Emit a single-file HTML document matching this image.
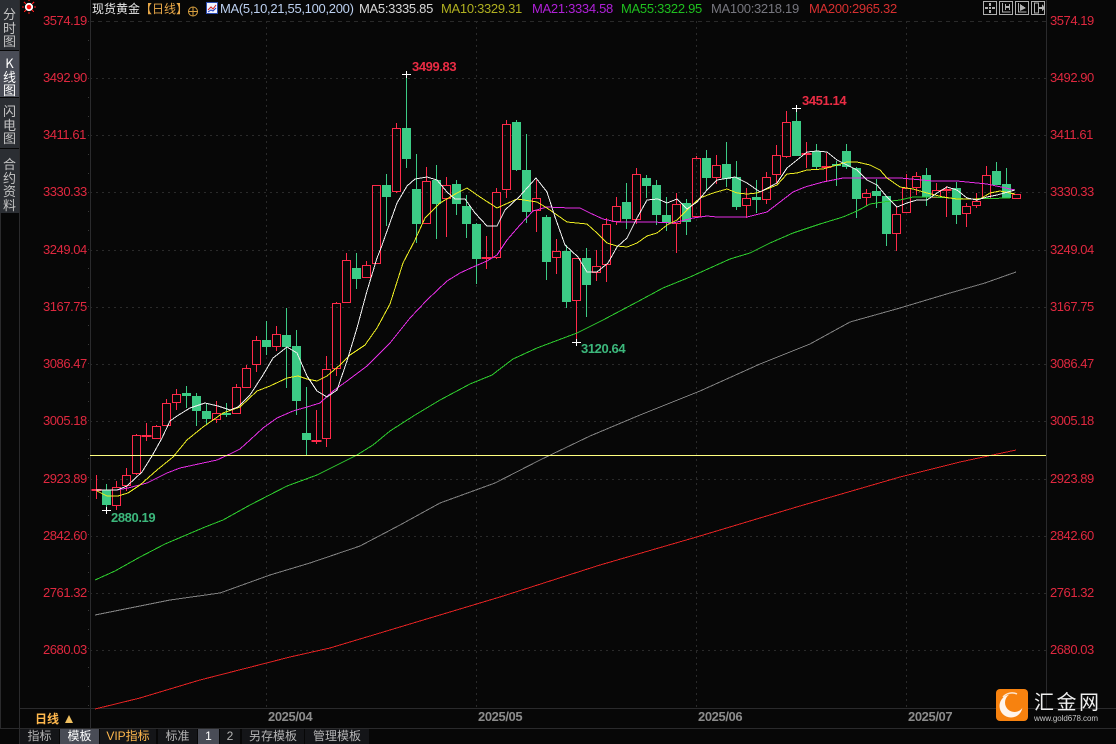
<!DOCTYPE html>
<html lang="zh">
<head>
<meta charset="utf-8">
<title>现货黄金 日线</title>
<style>
html,body{margin:0;padding:0;background:#070707;overflow:hidden}
#r{position:relative;width:1116px;height:744px;background:#070707;overflow:hidden;font-family:"Liberation Sans","WenQuanYi Zen Hei","Noto Sans CJK SC",sans-serif}
svg{position:absolute;left:0;top:0}
.t{position:absolute;left:0;width:19px;text-align:center;font-size:13px;line-height:13.5px;color:#c4c4c4;background:#2b2e33;font-family:"WenQuanYi Zen Hei","Noto Sans CJK SC",sans-serif;box-sizing:border-box}
.b{position:absolute;top:729px;height:15px;line-height:15px;text-align:center;font-size:12px;color:#b4b4b4;background:#141518;font-family:"Liberation Sans","WenQuanYi Zen Hei","Noto Sans CJK SC",sans-serif}
.h{position:absolute;top:1px;font-size:13px;letter-spacing:-.3px;line-height:16px;white-space:nowrap}
</style>
</head>
<body>
<div id="r">
<svg width="1116" height="744" viewBox="0 0 1116 744">
<g fill="none" stroke="#2a2a2a" stroke-width="1" shape-rendering="crispEdges">
<path stroke-dasharray="4 4" d="M90 21.5H1046"/>
<path stroke-dasharray="2 4" d="M90 78.5H1046M90 135.5H1046M90 192.5H1046M90 250.5H1046M90 307.5H1046M90 364.5H1046M90 421.5H1046M90 479.5H1046M90 536.5H1046M90 593.5H1046M90 650.5H1046"/>
<path stroke-dasharray="2 4" d="M266.5 21V708M476.5 21V708M696.5 21V708M906.5 21V708"/>
<path stroke="#2a2a2c" d="M90.5 0V728M1046.5 0V708M20 708.5H1116M0 728.5H1116M19.5 0V744M0.5 213V728"/>
</g>
<path fill="none" stroke="#3a3a3a" shape-rendering="crispEdges" stroke-dasharray="1 18" d="M88.5 21V708"/>

<path fill="#3ccb85" shape-rendering="crispEdges" d="M102 490h9V505h-9zM182 393h9v3h-9zM192 396h9v15h-9zM202 411h9v8h-9zM222 413h9v2h-9zM262 340h9v7h-9zM282 335h9v12h-9zM292 346h9v55h-9zM302 433h9v7h-9zM352 268h9v11h-9zM382 185h9v12h-9zM402 128h9v31h-9zM412 189h9v35h-9zM432 180h9v24h-9zM452 184h9v20h-9zM462 206h9v18h-9zM472 224h9v35h-9zM512 122h9v48h-9zM522 170h9v42h-9zM542 217h9v45h-9zM562 251h9v51h-9zM582 258h9v27h-9zM622 202h9v17h-9zM642 178h9v8h-9zM652 185h9v30h-9zM662 215h9v8h-9zM682 203h9v19h-9zM702 158h9v20h-9zM722 164h9v15h-9zM732 177h9v30h-9zM752 197h9v3h-9zM792 121h9v35h-9zM812 151h9v16h-9zM832 164h9v2h-9zM842 151h9v16h-9zM852 168h9v31h-9zM872 191h9v5h-9zM882 196h9v38h-9zM922 175h9v22h-9zM952 188h9v27h-9zM992 171h9v14h-9zM1002 184h9v14h-9z"/>
<path fill="none" stroke="#3ccb85" shape-rendering="crispEdges" d="M106.5 484V511M186.5 386V408M196.5 393V426M206.5 403V424M226.5 403V417M266.5 321V355M286.5 308V388M296.5 330V415M306.5 387V455M356.5 253V289M386.5 174V226M406.5 74V168M416.5 154V243M436.5 165V239M456.5 180V215M466.5 195V238M476.5 223V284M516.5 120V171M526.5 134V223M546.5 215V280M566.5 245V308M586.5 248V317M626.5 183V229M646.5 175V198M656.5 180V225M666.5 197V231M686.5 199V235M706.5 150V191M726.5 142V187M736.5 161V210M756.5 180V213M796.5 108V156M816.5 144V170M836.5 161V186M846.5 144V169M856.5 167V218M876.5 179V208M886.5 196V246M926.5 168V206M956.5 182V224M996.5 162V185M1006.5 168V198"/>
<path fill="none" stroke="#ff2a4a" shape-rendering="crispEdges" d="M92 489.5h9v1h-9zM96.5 475V499M112.5 487.5h8V505.5h-8zM116.5 481V487M116.5 506V510M122.5 475.5h8V485.5h-8zM126.5 468V475M126.5 486V491M132.5 435.5h8V473.5h-8zM136.5 434V435M136.5 474V475M142 435.5h9v1h-9zM146.5 423V441M152.5 426.5h8V438.5h-8zM156.5 425V426M162.5 403.5h8V425.5h-8zM166.5 399V403M172.5 394.5h8V402.5h-8zM176.5 389V394M176.5 403V410M212.5 413.5h8V419.5h-8zM216.5 401V413M216.5 420V423M232.5 387.5h8V413.5h-8zM236.5 384V387M242.5 368.5h8V387.5h-8zM246.5 365V368M252.5 340.5h8V364.5h-8zM256.5 336V340M256.5 365V372M272.5 334.5h8V346.5h-8zM276.5 326V334M276.5 347V351M312 440.5h9v1h-9zM316.5 410V444M322.5 369.5h8V438.5h-8zM326.5 356V369M326.5 439V447M332.5 303.5h8V368.5h-8zM336.5 302V303M336.5 369V376M342.5 260.5h8V302.5h-8zM346.5 253V260M362.5 265.5h8V277.5h-8zM366.5 261V265M372.5 185.5h8V263.5h-8zM392.5 128.5h8V191.5h-8zM396.5 123V128M396.5 192V193M422.5 181.5h8V223.5h-8zM426.5 167V181M442.5 185.5h8V198.5h-8zM446.5 177V185M446.5 199V237M482 257.5h9v1h-9zM486.5 236V269M492.5 192.5h8V257.5h-8zM496.5 188V192M496.5 258V259M502.5 124.5h8V189.5h-8zM506.5 120V124M506.5 190V198M532.5 198.5h8V210.5h-8zM536.5 180V198M536.5 211V232M552.5 251.5h8V257.5h-8zM556.5 239V251M556.5 258V274M572.5 258.5h8V300.5h-8zM576.5 301V342M592.5 266.5h8V272.5h-8zM596.5 250V266M596.5 273V281M602.5 224.5h8V264.5h-8zM606.5 218V224M606.5 265V282M612.5 206.5h8V221.5h-8zM616.5 197V206M616.5 222V225M632.5 174.5h8V219.5h-8zM636.5 168V174M636.5 220V224M672.5 204.5h8V223.5h-8zM676.5 193V204M676.5 224V253M692.5 158.5h8V216.5h-8zM696.5 156V158M712.5 165.5h8V177.5h-8zM716.5 155V165M716.5 178V184M742.5 198.5h8V205.5h-8zM746.5 188V198M746.5 206V218M762.5 177.5h8V199.5h-8zM766.5 172V177M766.5 200V204M772.5 155.5h8V174.5h-8zM776.5 145V155M776.5 175V184M782.5 122.5h8V156.5h-8zM786.5 111V122M786.5 157V158M802 153.5h9v1h-9zM806.5 142V168M822 166.5h9v1h-9zM826.5 153V181M862.5 193.5h8V197.5h-8zM866.5 189V193M866.5 198V206M892.5 214.5h8V233.5h-8zM896.5 207V214M896.5 234V251M902.5 188.5h8V212.5h-8zM906.5 174V188M912.5 176.5h8V187.5h-8zM916.5 172V176M916.5 188V195M932.5 190.5h8V197.5h-8zM936.5 183V190M942 189.5h9v1h-9zM946.5 186V217M962.5 206.5h8V213.5h-8zM966.5 203V206M966.5 214V227M972.5 201.5h8V205.5h-8zM976.5 193V201M976.5 206V208M982.5 175.5h8V198.5h-8zM986.5 166V175M1012.5 194.5h8V198.5h-8z"/>

<g fill="none" stroke-width="1" stroke-linejoin="round" shape-rendering="crispEdges">
<polyline stroke="#e02222" points="95,709 140,698 200,680 290,657 330,648 400,627 500,597 600,565 700,536 800,506 900,477 960,462 1016,450"/>
<polyline stroke="#808080" points="95,615 130,608 170,600 220,593 270,575 310,563 360,546 400,525 440,503 495,483 540,460 590,436 640,415 700,391 760,364 810,344 850,322 900,308 950,293 985,283 1016,272"/>
<polyline stroke="#2ecc2e" points="95,580 115,571 140,557 165,544 205,527 223,520 250,505 287,486 317,475 337,465 357,455 373,445 390,431 415,415 440,400 470,384 492,375 513,359 537,348 577,333 603,320 637,302 663,288 690,277 730,259 750,253 770,243 793,233 820,224 843,217 857,211 870,204 883,202 900,200 913,197 933,197 967,199 1010,198"/>
<polyline stroke="#e62ee6" points="107,490 117,490 128,488 147,483 167,473 180,468 203,463 217,460 230,454 240,449 250,440 263,428 277,418 293,411 307,407 320,403 333,391 347,381 367,366 380,353 390,343 410,318 427,300 447,281 460,273 473,267 487,261 497,255 507,240 520,225 533,211 547,207 570,208 580,208 590,213 603,219 617,222 633,222 653,222 673,223 693,218 707,216 717,217 747,217 767,212 780,202 793,192 805,187 823,182 843,178 870,178 900,178 933,181 957,181 987,184 1015,190"/>
<polyline stroke="#eeee22" points="97,491 107,496 118,496 128,493 140,485 157,470 173,457 187,440 203,427 223,413 240,407 257,391 270,386 287,378 298,376 307,379 317,381 327,376 340,365 350,355 365,345 377,328 390,304 403,263 415,240 425,218 440,203 457,193 467,188 480,197 497,208 517,199 537,202 547,208 557,215 567,222 587,224 597,233 607,243 617,246 627,247 637,243 647,236 657,233 667,225 677,220 690,207 700,198 713,193 727,189 737,193 747,194 757,193 777,185 787,174 797,173 807,170 823,169 837,165 847,162 857,162 870,165 880,170 887,178 900,187 913,189 927,193 943,197 957,199 967,199 980,199 990,193 1000,191 1015,194"/>
<polyline stroke="#f0f0f0" points="96,490 117,490 127,486 142,472 152,456 162,438 170,421 177,416 190,408 205,403 218,406 230,410 238,407 250,395 263,375 273,358 287,347 297,353 307,376 317,391 327,397 337,390 347,361 357,328 367,291 377,258 381,248 397,203 407,186 415,179 427,177 437,180 447,192 455,199 465,199 475,213 487,226 497,226 505,210 519,197 536,178 547,192 555,217 565,245 578,257 587,272 597,272 608,263 617,247 627,238 637,218 647,200 658,199 667,203 677,199 687,209 697,202 707,190 717,180 735,177 747,183 760,192 777,183 787,168 797,160 807,152 817,151 827,152 837,160 847,165 857,170 867,180 877,185 887,197 897,207 907,203 917,200 927,200 937,193 947,187 957,190 967,198 977,200 987,197 997,195 1015,190"/>
</g>
<path stroke="#ffff80" d="M90 455.5H1046" shape-rendering="crispEdges"/>
<path stroke="#fff" fill="none" shape-rendering="crispEdges" d="M402 74.5h9M406.5 71v7M792 108.5h9M796.5 105v7M102 510.5h9M106.5 507v7M572 342.5h9M576.5 339v7"/>

<g font-family="'Liberation Sans',sans-serif" font-size="13" fill="#e0283f" letter-spacing="-.45">
<text x="43" y="25">3574.19</text><text x="43" y="82">3492.90</text><text x="43" y="139">3411.61</text><text x="43" y="196">3330.33</text><text x="43" y="254">3249.04</text><text x="43" y="311">3167.75</text><text x="43" y="368">3086.47</text><text x="43" y="425">3005.18</text><text x="43" y="483">2923.89</text><text x="43" y="540">2842.60</text><text x="43" y="597">2761.32</text><text x="43" y="654">2680.03</text>
<text x="1050" y="25">3574.19</text><text x="1050" y="82">3492.90</text><text x="1050" y="139">3411.61</text><text x="1050" y="196">3330.33</text><text x="1050" y="254">3249.04</text><text x="1050" y="311">3167.75</text><text x="1050" y="368">3086.47</text><text x="1050" y="425">3005.18</text><text x="1050" y="483">2923.89</text><text x="1050" y="540">2842.60</text><text x="1050" y="597">2761.32</text><text x="1050" y="654">2680.03</text>
</g>
<g font-family="'Liberation Sans',sans-serif" font-size="13" font-weight="bold" letter-spacing="-.4">
<text x="412" y="71" fill="#ea2c44">3499.83</text>
<text x="802" y="105" fill="#ea2c44">3451.14</text>
<text x="111" y="522" fill="#3cb87c">2880.19</text>
<text x="581" y="353" fill="#3cb87c">3120.64</text>
<g fill="#8c8c8c"><text x="268" y="721">2025/04</text><text x="478" y="721">2025/05</text><text x="698" y="721">2025/06</text><text x="908" y="721">2025/07</text></g>
</g>

<!-- blink icon -->
<circle cx="29" cy="7" r="3.2" fill="#ff1010" stroke="#fff" stroke-width="1.8"/>
<path stroke="#ff1a1a" fill="none" shape-rendering="crispEdges" d="M29 0v1M29 12v2M22 7h2M34 7h2M24 2l2 2M32 10l2 2M34 2l-2 2M26 10l-2 2"/>
<!-- crosshair icon -->
<circle cx="193" cy="11.5" r="4.5" fill="none" stroke="#d8a040"/>
<path stroke="#d8a040" d="M188 11.5h10M193 7v9" shape-rendering="crispEdges"/>
<!-- MA icon -->
<rect x="206.5" y="2.5" width="11" height="11" fill="#f4f4ff" stroke="#2b4bb0"/>
<path d="M208 10l3-3 2 2 3-4" fill="none" stroke="#d02020"/>
<path d="M208 12l3-2 2 1 3-3" fill="none" stroke="#2040c0"/>
<!-- toolbar icons -->
<g fill="none" stroke="#b0b0b0" shape-rendering="crispEdges">
<rect x="983.5" y="1.5" width="13" height="13"/><rect x="999.5" y="1.5" width="13" height="13"/><rect x="1015.5" y="1.5" width="13" height="13"/><rect x="1031.5" y="1.5" width="13" height="13"/>
<path d="M1002.5 3v9h8M1005.5 4v6M1009.5 4v6"/>
<path d="M1018.5 3v9h8"/>
<path d="M1034.5 3v10h4v-10z"/>
</g>
<path fill="#b0b0b0" shape-rendering="crispEdges" d="M989 3h2v3h-2zM989 10h2v3h-2zM985 7h3v2h-3zM992 7h3v2h-3zM989 7h2v2h-2zM1006 6h3v2h-3zM1020 4l6 4-6 3zM1039 7h3V4l3 4-3 3V9h-3z"/>
<!-- triangle -->
<path d="M65 723l4-8 4 8z" fill="#f0c060"/>
<!-- logo -->
<rect x="996" y="689" width="32" height="32" rx="4" fill="#f7820f"/>
<circle cx="1011" cy="706" r="11.5" fill="#fff" opacity=".92"/>
<circle cx="1014.5" cy="702.5" r="9.5" fill="#f7820f"/>
<path d="M1003 697a12 12 0 0 1 14-3" fill="none" stroke="#fff" stroke-width="1.5" opacity=".8"/>
<text x="1034" y="709" font-family="'WenQuanYi Zen Hei','Noto Sans CJK SC',sans-serif" font-size="20" fill="#eee" letter-spacing="2.5">汇金网</text>
<text x="1034" y="721" font-family="'Liberation Sans',sans-serif" font-size="8" fill="#c8c8c8" textLength="64">www.gold678.com</text>
</svg>

<div class="t" style="top:0;height:50px;padding-top:7px">分<br>时<br>图</div>
<div class="t" style="top:51px;height:46px;padding-top:5px;background:#494c56;color:#fff">K<br>线<br>图</div>
<div class="t" style="top:98px;height:50px;padding-top:6px">闪<br>电<br>图</div>
<div class="t" style="top:149px;height:64px;padding-top:8px">合<br>约<br>资<br>料</div>

<div class="h" style="left:92px;color:#e8e8e8;font-size:12px;letter-spacing:0">现货黄金</div>
<div class="h" style="left:140px;color:#e8a848;font-size:12px;letter-spacing:0">【日线】</div>
<div class="h" style="left:220px;color:#bcd0f0">MA(5,10,21,55,100,200)</div>
<div class="h" style="left:359px;color:#d8d8d8">MA5:3335.85</div>
<div class="h" style="left:441px;color:#b0b020">MA10:3329.31</div>
<div class="h" style="left:532px;color:#b020d8">MA21:3334.58</div>
<div class="h" style="left:621px;color:#1fc01f">MA55:3322.95</div>
<div class="h" style="left:711px;color:#77777f">MA100:3218.19</div>
<div class="h" style="left:809px;color:#d83030">MA200:2965.32</div>

<div style="position:absolute;left:35px;top:711px;font-size:12px;line-height:16px;font-weight:bold;color:#ffb84d;font-family:'Liberation Sans','WenQuanYi Zen Hei','Noto Sans CJK SC',sans-serif">日线</div>

<div class="b" style="left:20px;width:39px">指标</div>
<div class="b" style="left:60px;width:39px;background:#494c56;color:#fff">模板</div>
<div class="b" style="left:100px;width:56px;color:#ffb84d">VIP指标</div>
<div class="b" style="left:158px;width:39px">标准</div>
<div class="b" style="left:198px;width:21px;background:#494c56;color:#fff">1</div>
<div class="b" style="left:220px;width:20px">2</div>
<div class="b" style="left:242px;width:62px">另存模板</div>
<div class="b" style="left:305px;width:64px">管理模板</div>
</div>
</body>
</html>
